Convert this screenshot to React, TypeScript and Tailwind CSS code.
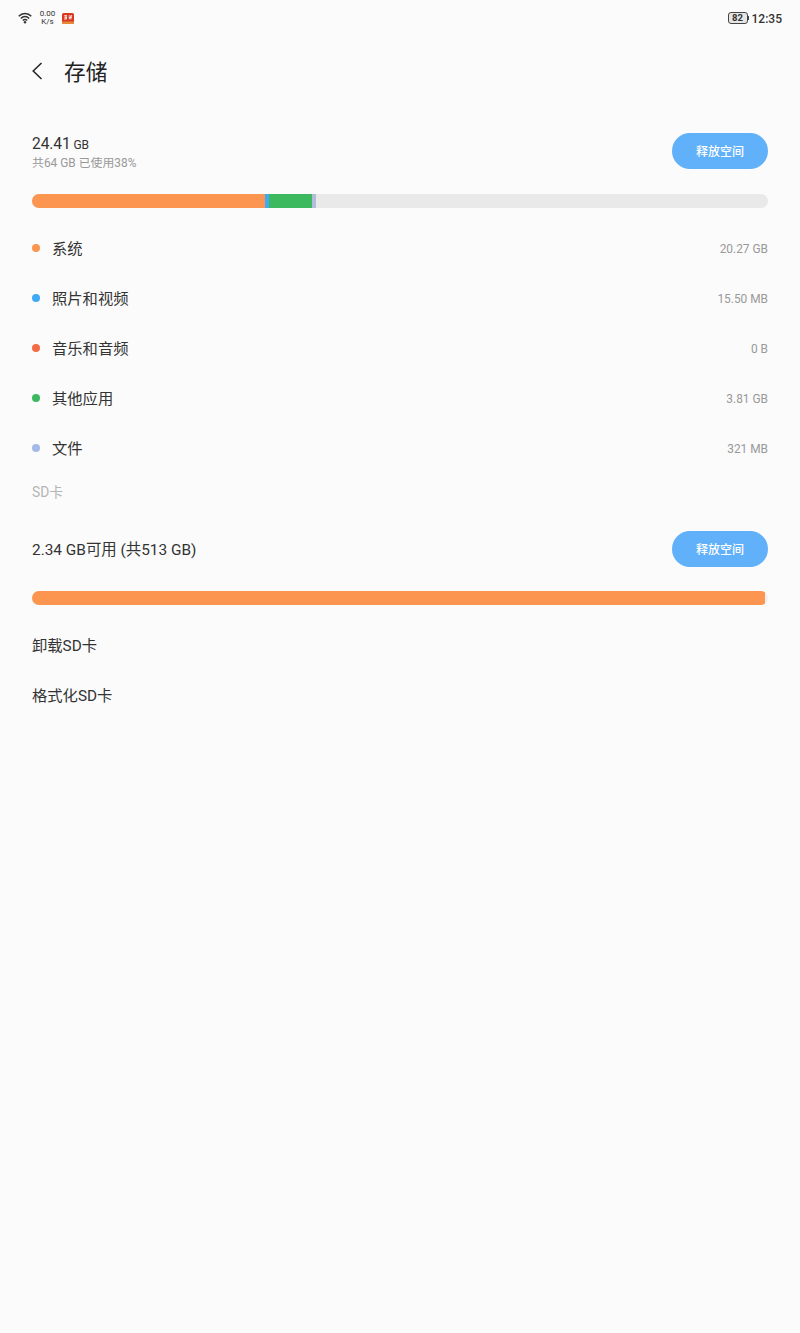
const categories = [
  { name: "系统", size: "20.27 GB", dot: "bg-[#fb9550]" },
  { name: "照片和视频", size: "15.50 MB", dot: "bg-[#3fa9f5]" },
  { name: "音乐和音频", size: "0 B", dot: "bg-[#f26b45]" },
  { name: "其他应用", size: "3.81 GB", dot: "bg-[#3cb95f]" },
  { name: "文件", size: "321 MB", dot: "bg-[#a5b9e8]" },
]

const sdActions = ["卸载SD卡", "格式化SD卡"]

function WifiIcon() {
  return (
    <svg width="14" height="12" viewBox="0 0 14 12" fill="none" stroke="#333" strokeWidth="1.4">
      <path d="M0.7 4.2C4.2 0.5 9.8 0.5 13.3 4.2" />
      <path d="M2.8 6.4C5.2 3.9 8.8 3.9 11.2 6.4" />
      <path d="M4.8 8.5C6.1 7.2 7.9 7.2 9.2 8.5" />
      <circle cx="7" cy="10.3" r="1.2" fill="#333" stroke="none" />
    </svg>
  )
}

function AppBadge() {
  return (
    <svg width="12" height="11" viewBox="0 0 12 11" fill="none">
      <rect width="12" height="11" rx="1.5" fill="#d8391f" />
      <path d="M0 8.5H12V9.5A1.5 1.5 0 0 1 10.5 11H1.5A1.5 1.5 0 0 1 0 9.5Z" fill="#e88a3c" />
      <path d="M2 2.8H5M2.4 4.4H5M2 6.2L5 5.6M4 2V6.4M6.5 3H10M6.7 4.6H10M7 6.3L9.8 2.2M8.8 4.5V6.5" stroke="#fff" strokeWidth="0.8" />
    </svg>
  )
}

function StatusBar() {
  return (
    <header className="flex h-9 items-center justify-between px-[18px] text-[#333]">
      <div className="flex items-center">
        <WifiIcon />
        <div className="ml-[7px] w-[17px] text-center text-[8px] leading-[8px]">
          <div>0.00</div>
          <div>K/s</div>
        </div>
        <div className="ml-1.5">
          <AppBadge />
        </div>
      </div>
      <div className="flex items-center">
        <div className="flex h-3 w-5 items-center justify-center rounded-[3px] border border-[#444] bg-[#e6e6e6] text-[9.5px] font-bold leading-none">
          82
        </div>
        <div className="h-1 w-px bg-[#444]" />
        <span className="ml-[3px] pt-px text-xs font-medium leading-none">12:35</span>
      </div>
    </header>
  )
}

function FreeUpButton() {
  return (
    <button className="h-9 w-24 rounded-full bg-[#60b0fa] pt-0.5 text-xs font-medium text-white">
      释放空间
    </button>
  )
}

export default function App() {
  return (
    <div className="min-h-[1333px] w-full bg-[#fbfbfb] font-['Roboto','Noto_Sans_CJK_SC',sans-serif] text-[#333]">
      <StatusBar />

      <div className="flex h-[70px] items-center px-8">
        <svg width="11" height="18" viewBox="0 0 11 18" fill="none" stroke="#222" strokeWidth="1.5">
          <path d="M9.5 1L1.2 9L9.5 17" />
        </svg>
        <h1 className="ml-[21px] pt-[3px] text-[21.7px] leading-8 text-[#222]">存储</h1>
      </div>

      <main className="px-8">
        <div className="mt-[27px] flex h-9 items-center justify-between">
          <div className="pt-1">
            <div className="text-[15.6px] leading-[20px] tracking-[-0.1px]">
              24.41 <span className="-ml-px text-xs">GB</span>
            </div>
            <div className="text-[11.9px] leading-[18px] text-[#999]">共64 GB 已使用38%</div>
          </div>
          <FreeUpButton />
        </div>

        <div className="mt-[25px] flex h-3.5 overflow-hidden rounded-full bg-[#e9e9e9]">
          <div className="w-[233px] bg-[#fb9550]" />
          <div className="w-1 bg-[#3fa9f5]" />
          <div className="w-[43px] bg-[#3cb95f]" />
          <div className="w-1 bg-[#b4bcdb]" />
        </div>

        <ul className="mt-[15px]">
          {categories.map((c) => (
            <li key={c.name} className="flex h-[50px] items-center">
              <span className={`size-2 rounded-full ${c.dot}`} />
              <span className="ml-3 pt-0.5 text-[15.3px]">{c.name}</span>
              <span className="ml-auto pt-[3px] text-[11.9px] text-[#999]">{c.size}</span>
            </li>
          ))}
        </ul>

        <h2 className="mt-[9px] text-[13.8px] leading-5 text-[#b5b5b5]">SD卡</h2>

        <div className="mt-[29px] flex h-9 items-center justify-between">
          <span className="pt-[3px] text-[15.4px]">2.34 GB可用 (共513 GB)</span>
          <FreeUpButton />
        </div>

        <div className="mt-6 h-3.5 overflow-hidden rounded-full bg-[#f0f0f0]">
          <div className="h-full w-[733px] rounded-r-[2px] bg-[#fb9550]" />
        </div>

        <ul className="mt-4">
          {sdActions.map((action) => (
            <li key={action} className="flex h-[50px] items-center pt-px text-[15.3px]">
              {action}
            </li>
          ))}
        </ul>
      </main>
    </div>
  )
}
